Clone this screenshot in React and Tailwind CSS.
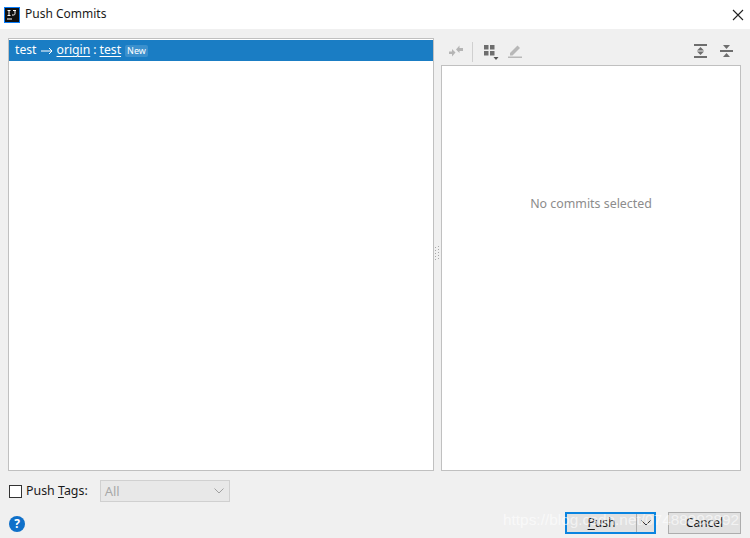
import React from "react";

const font = { fontFamily: '"Noto Sans", "Open Sans", sans-serif' };

function Logo() {
  return (
    <svg width="16" height="16" viewBox="0 0 16 16" className="shrink-0">
      <rect x="0" y="0" width="16" height="16" fill="#087cfa" />
      <rect x="1" y="1" width="14" height="14" fill="#111" />
      <path d="M3.500 3.500h3M5 3.500v5M3.500 8.500h3M8 8h1.500c1 0 1.500-.5 1.500-1.500V3.500M9 3.500h3" stroke="#fff" strokeWidth="1" fill="none" />
      <rect x="3" y="11.500" width="5" height="1" fill="#fff" />
    </svg>
  );
}

function Close() {
  return (
    <svg width="12" height="12" viewBox="0 0 12 12">
      <path d="M1 1l10 10M11 1L1 11" stroke="#222" strokeWidth="1.1" />
    </svg>
  );
}

function Collapse() {
  return (
    <svg width="16" height="16" viewBox="0 0 16 16">
      <path d="M8 6.500L11.500 2.500V5H15V8H11.500V10z" fill="#b5b5b5" />
      <path d="M7.500 9.500L4 13.500V11H1V8.500H4V6z" fill="#b5b5b5" />
    </svg>
  );
}

function Grid() {
  return (
    <svg width="16" height="18" viewBox="0 0 16 18">
      <path d="M1 1h4.500v4.500H1zM7 1h4.500v4.500H7zM1 7h4.500v4.500H1zM7 7h4.500v4.500H7z" fill="#6e6e6e" />
      <path d="M10.500 13h5L13 16z" fill="#555" />
    </svg>
  );
}

function Pencil() {
  return (
    <svg width="16" height="16" viewBox="0 0 16 16">
      <path d="M3 10L10.500 2.500l2.500 2.500L5.500 12.500H3z" fill="#b8b8b8" />
      <rect x="1" y="13.500" width="14" height="1.500" fill="#b8b8b8" />
    </svg>
  );
}

function Expand() {
  return (
    <svg width="14" height="16" viewBox="0 0 14 16">
      <rect x="0" y="1" width="13" height="2" fill="#6e6e6e" />
      <rect x="0" y="13" width="13" height="2" fill="#6e6e6e" />
      <path d="M6.500 4l3.500 3.500H3zM6.500 12L10 8.500H3z" fill="#6e6e6e" />
    </svg>
  );
}

function CollapseAll() {
  return (
    <svg width="14" height="16" viewBox="0 0 14 16">
      <rect x="0" y="7" width="13" height="2" fill="#6e6e6e" />
      <path d="M6.500 6L3 2h7zM6.500 10l3.500 4H3z" fill="#6e6e6e" />
    </svg>
  );
}

function Chevron({ color }) {
  return (
    <svg width="10" height="6" viewBox="0 0 10 6">
      <path d="M.5.500L5 5 9.500.500" stroke={color} strokeWidth="1" fill="none" />
    </svg>
  );
}

export default function App() {
  return (
    <div className="relative w-[750px] h-[538px] overflow-hidden bg-[#f0f0f0] flex flex-col text-[13px] text-[#1a1a1a]" style={font}>
      <header className="h-[29px] bg-white flex items-center pl-[4px] pr-[6px] gap-[5px] shrink-0">
        <Logo />
        <span className="text-[12px] leading-none mt-[-1px]">Push Commits</span>
        <span className="ml-auto flex"><Close /></span>
      </header>

      <main className="flex shrink-0 pl-[8px] pr-[9px] pt-[9px]">
        <section className="w-[426px] h-[433px] bg-white border border-[#c0c0c0] pt-[1px] shrink-0">
          <div className="h-[21px] bg-[#1a7dc4] text-white flex items-center pl-[6px] text-[12.2px] leading-none">
            <span>test</span>
            <svg width="12" height="8" viewBox="0 0 12 8" className="ml-[4px]">
              <path d="M0 4h11M8 1l3 3-3 3" stroke="#fff" strokeWidth="1" fill="none" />
            </svg>
            <span className="ml-[4px] underline underline-offset-2">origin</span>
            <span className="ml-[3px]">:</span>
            <span className="ml-[3px] underline underline-offset-2">test</span>
            <span className="ml-[4px] px-[2px] py-[1px] rounded-[2px] bg-[#3b90cd] text-[9px] leading-[10px]">New</span>
          </div>
        </section>

        <div className="w-[7px] h-[433px] shrink-0 flex items-center justify-center">
          <svg width="7" height="16" viewBox="0 0 7 16" className="mb-[3px]">
            <path d="M1 2h1v1H1zM4 1h1v1H4zM1 5h1v1H1zM4 4h1v1H4zM1 8h1v1H1zM4 7h1v1H4zM1 11h1v1H1zM4 10h1v1H4zM1 14h1v1H1zM4 13h1v1H4z" fill="#a8a8a8" />
          </svg>
        </div>

        <section className="flex-1 h-[433px] flex flex-col min-w-0">
          <div className="h-[27px] shrink-0 flex items-center pl-[7px] pr-[7px]">
            <span className="flex mt-[-1px]"><Collapse /></span>
            <span className="w-px h-[20px] bg-[#d0d0d0] ml-[8px] mr-[10px]" />
            <span className="flex mt-[2px]"><Grid /></span>
            <span className="flex ml-[8px] mt-[-1px]"><Pencil /></span>
            <span className="flex ml-auto mt-[-1px]"><Expand /></span>
            <span className="flex ml-[12px] mt-[-1px]"><CollapseAll /></span>
          </div>
          <div className="flex-1 bg-white border border-[#c0c0c0] flex justify-center pt-[129px]">
            <span className="text-[#8c8c8c] text-[12.4px] leading-[18px]">No commits selected</span>
          </div>
        </section>
      </main>

      <footer className="flex-1 flex flex-col min-h-0">
        <div className="h-[22px] mt-[9px] flex items-center pl-[9px] shrink-0">
          <span className="w-[13px] h-[13px] border border-[#333] bg-white shrink-0" />
          <span className="ml-[4px] text-[12.400px] leading-none">Push <span className="underline underline-offset-2">T</span>ags:</span>
          <div className="ml-[12px] w-[130px] h-[22px] bg-[#e8e8e8] border border-[#d0d0d0] flex items-center pl-[4px] pr-[5px]">
            <span className="text-[#a8a8a8] text-[13px] leading-none">All</span>
            <span className="ml-auto flex"><Chevron color="#a0a0a0" /></span>
          </div>
        </div>
        <div className="flex items-start pl-[9px] pr-[9px] pt-[10px]">
          <span className="mt-[4px] w-[16px] h-[16px] rounded-full bg-[#0f70c9] text-white text-[12px] font-bold flex items-center justify-center leading-none">?</span>
          <div className="ml-auto flex gap-[12px]">
            <div className="w-[91px] h-[22px] border-2 border-[#0a84e0] bg-[#e1e1e1] flex items-center">
              <span className="flex-1 text-center text-[12px] leading-none"><span className="underline underline-offset-2">P</span>ush</span>
              <span className="w-[18px] h-full border-l border-[#adadad] flex items-center justify-center"><Chevron color="#333" /></span>
            </div>
            <div className="w-[73px] h-[22px] border border-[#adadad] bg-[#e1e1e1] flex items-center justify-center text-[12px] leading-none">Cancel</div>
          </div>
        </div>
      </footer>

      <div className="absolute left-[503px] top-[509px] text-[15.400px] leading-[22px] text-white/60 whitespace-nowrap pointer-events-none" style={{ fontFamily: '"Liberation Sans", sans-serif' }}>https://blog.csdn.net/07488993892</div>
    </div>
  );
}
